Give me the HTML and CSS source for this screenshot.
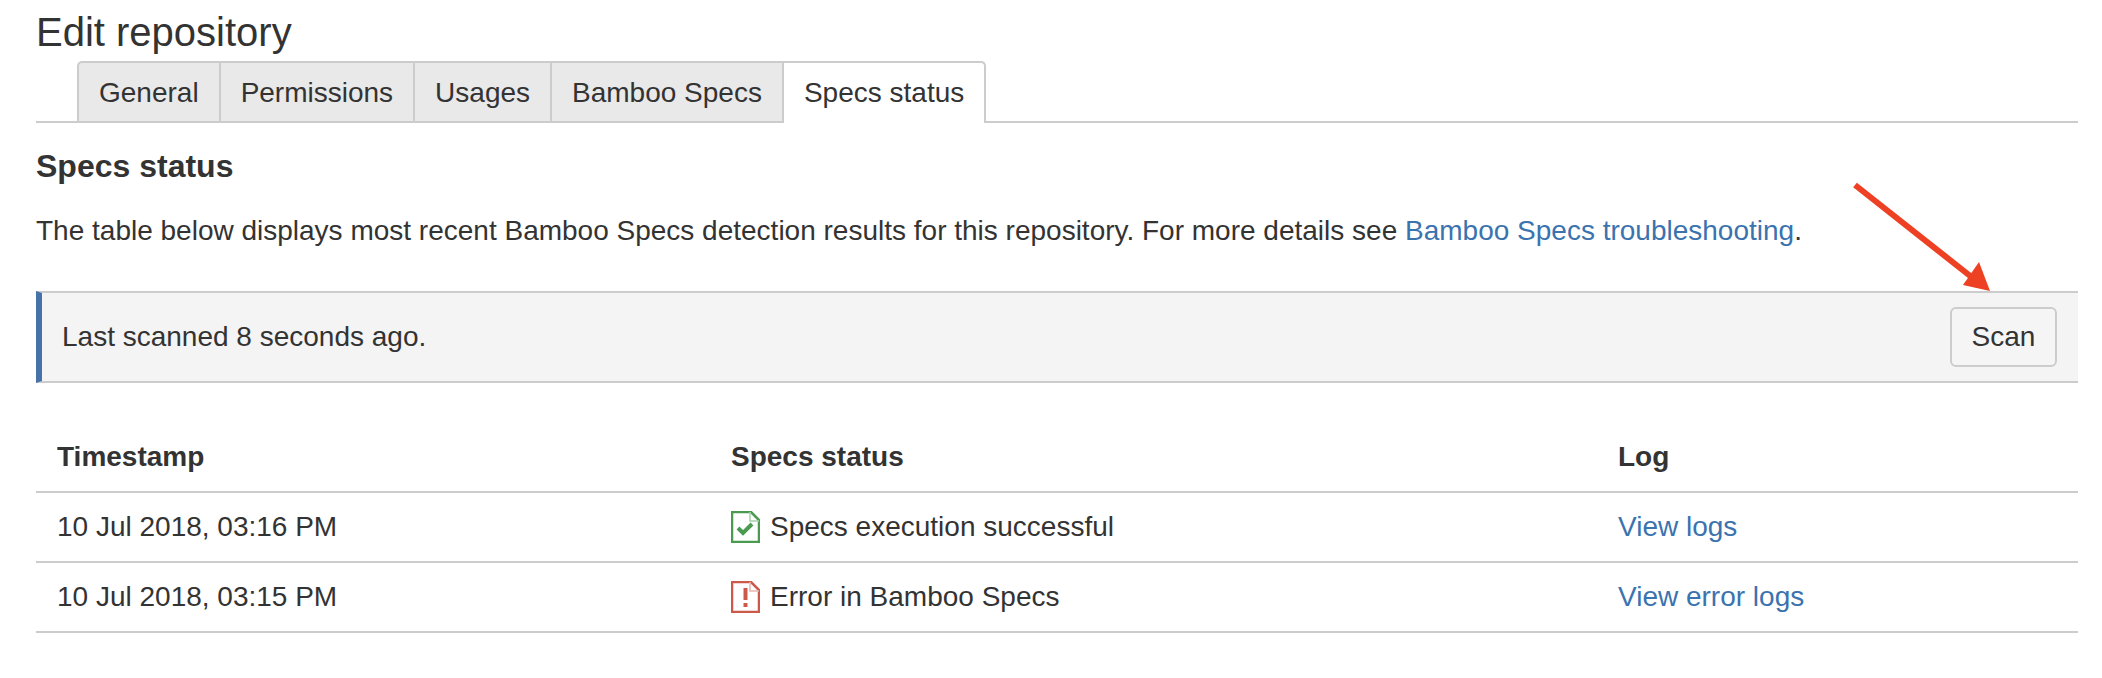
FILE: index.html
```html
<!DOCTYPE html>
<html lang="en">
<head>
    <meta charset="UTF-8">
    <meta name="viewport" content="width=device-width, initial-scale=1.0">
    <title>Edit repository</title>
    <link rel="stylesheet" href="styles.css">
</head>
<body>
    <h1 class="page-title">Edit repository</h1>

    <div class="tabs">
        <a class="tab">General</a>
        <a class="tab">Permissions</a>
        <a class="tab">Usages</a>
        <a class="tab">Bamboo Specs</a>
        <a class="tab active">Specs status</a>
    </div>

    <h2 class="section-title">Specs status</h2>
    <p class="intro">The table below displays most recent Bamboo Specs detection results for this repository. For more details see <a class="link">Bamboo Specs troubleshooting</a>.</p>

    <div class="message">
        <span>Last scanned 8 seconds ago.</span>
        <button class="scan-btn">Scan</button>
    </div>

    <table class="results">
        <thead>
            <tr>
                <th class="col-time">Timestamp</th>
                <th class="col-status">Specs status</th>
                <th>Log</th>
            </tr>
        </thead>
        <tbody>
            <tr>
                <td>10 Jul 2018, 03:16 PM</td>
                <td>
                    <div class="status">
                        <svg class="status-icon" viewBox="0 0 29 32">
                            <path d="M1 1H20L28 9V31H1Z" fill="#fff" stroke="#4a9a4f" stroke-width="2.5"/>
                            <path d="M19 1V10H28" fill="none" stroke="#a8d0aa" stroke-width="1.5"/>
                            <path d="M7 17L12 22L21 13" fill="none" stroke="#4a9a4f" stroke-width="4"/>
                        </svg>
                        Specs execution successful
                    </div>
                </td>
                <td><a class="link">View logs</a></td>
            </tr>
            <tr>
                <td>10 Jul 2018, 03:15 PM</td>
                <td>
                    <div class="status">
                        <svg class="status-icon" viewBox="0 0 29 32">
                            <path d="M1 1H20L28 9V31H1Z" fill="#fff" stroke="#cb5a4b" stroke-width="2.5"/>
                            <path d="M19 1V10H28" fill="none" stroke="#eab5ad" stroke-width="1.5"/>
                            <path d="M14.5 7V19" fill="none" stroke="#cb5a4b" stroke-width="4"/>
                            <path d="M14.5 22V26" fill="none" stroke="#cb5a4b" stroke-width="4"/>
                        </svg>
                        Error in Bamboo Specs
                    </div>
                </td>
                <td><a class="link">View error logs</a></td>
            </tr>
        </tbody>
    </table>

    <!-- annotation drawn over the screenshot -->
    <svg class="arrow" viewBox="0 0 150 120">
        <path d="M5 5L124 99" fill="none" stroke="#ee4023" stroke-width="6"/>
        <path d="M140 111L113 105L129 82Z" fill="#ee4023"/>
    </svg>
</body>
</html>
```

FILE: styles.css
```css
body {
    position: relative;
    margin: 0;
    padding: 0 24px 0 36px;
    background: #fff;
    color: #333;
    font-family: "Liberation Sans", Arial, sans-serif;
    font-size: 28px;
}

.page-title {
    margin: 0;
    padding-top: 12px;
    height: 49px;
    line-height: 40px;
    font-size: 40px;
    font-weight: 400;
}

.tabs {
    display: flex;
    box-sizing: border-box;
    height: 62px;
    padding-left: 41px;
    border-bottom: 2px solid #ccc;
}

.tab {
    box-sizing: border-box;
    height: 60px;
    line-height: 60px;
    padding: 0 20px;
    background: #e9e9e9;
    border: 2px solid #ccc;
    border-bottom: 0;
    border-left-width: 0;
}

.tab:first-child {
    border-left-width: 2px;
    border-top-left-radius: 5px;
}

.tab.active {
    height: 62px;
    background: #fff;
    border-top-right-radius: 5px;
}

.section-title {
    margin: 26px 0 0;
    line-height: 34px;
    font-size: 32px;
    font-weight: 700;
}

.intro {
    margin: 28px 0 0;
    line-height: 40px;
}

.link {
    color: #3b73af;
}

.message {
    display: flex;
    align-items: center;
    justify-content: space-between;
    box-sizing: border-box;
    height: 92px;
    margin-top: 40px;
    padding: 0 21px 0 20px;
    background: #f4f4f4;
    border-top: 2px solid #ccc;
    border-bottom: 2px solid #ccc;
    border-left: 6px solid #4672a9;
}

.scan-btn {
    box-sizing: border-box;
    width: 107px;
    height: 60px;
    padding: 0;
    background: #f5f5f5;
    border: 2px solid #ccc;
    border-radius: 6px;
    color: #333;
    font-family: inherit;
    font-size: 28px;
}

.results {
    width: 100%;
    margin-top: 39px;
    border-collapse: collapse;
    table-layout: fixed;
}

.results th,
.results td {
    height: 70px;
    padding: 0 21px;
    box-sizing: border-box;
    border-bottom: 2px solid #ccc;
    text-align: left;
}

.col-time {
    width: 674px;
}

.col-status {
    width: 887px;
}

.status {
    display: flex;
    align-items: center;
    gap: 10px;
}

.status-icon {
    width: 29px;
    height: 32px;
}

.arrow {
    position: absolute;
    top: 180px;
    left: 1850px;
    width: 150px;
    height: 120px;
}
```
